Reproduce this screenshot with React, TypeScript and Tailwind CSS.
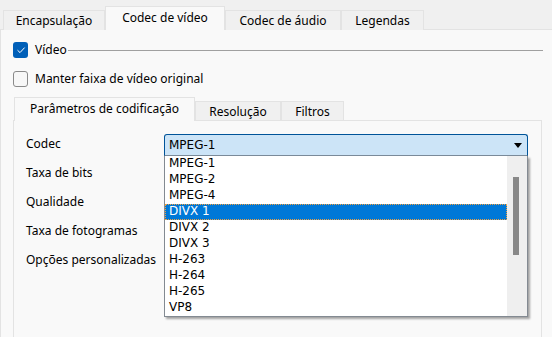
import React from 'react';

const codecs = ['MPEG-1', 'MPEG-2', 'MPEG-4', 'DIVX 1', 'DIVX 2', 'DIVX 3', 'H-263', 'H-264', 'H-265', 'VP8'];
const fields = ['Codec', 'Taxa de bits', 'Qualidade', 'Taxa de fotogramas', 'Opções personalizadas'];

function Tab({ label, active, w }: { label: string; active?: boolean; w: string }) {
  return (
    <div
      className={`${w} flex justify-center border border-[#e3e3e3] border-b-0 ${
        active ? 'h-[24px] bg-[#f9f9f9] pt-[2px] relative z-10' : 'h-[20px] bg-[#f0f0f0] pt-[1px]'
      }`}
    >
      {label}
    </div>
  );
}

export default function App() {
  return (
    <div
      className="w-[552px] h-[337px] overflow-hidden bg-[#f0f0f0] text-[12px] text-black"
      style={{ fontFamily: '"Noto Sans", "Open Sans", sans-serif' }}
    >
      <div className="flex items-end pl-[3px] pt-[6px]">
        <Tab label="Encapsulação" w="w-[102px]" />
        <Tab label="Codec de vídeo" w="w-[120px]" active />
        <Tab label="Codec de áudio" w="w-[116px]" />
        <Tab label="Legendas" w="w-[83px]" />
      </div>

      <div className="h-[320px] -mt-px bg-[#f9f9f9] border-t border-l border-[#e3e3e3] pl-[12px] pr-[10px]">
        <div className="flex items-center h-[18px] mt-[11px] gap-[7px]">
          <div className="w-[15px] h-[16px] rounded-[3px] bg-[#005fb8] flex items-center justify-center">
            <svg width="10" height="10" viewBox="0 0 10 10">
              <path d="M1.5 5.2 L4 7.6 L8.6 2.6" fill="none" stroke="white" strokeWidth="1" />
            </svg>
          </div>
          <span>Vídeo</span>
          <div className="flex-1 h-px bg-[#a0a0a0] -ml-[6px] -mr-[1px]" />
        </div>

        <div className="flex items-center h-[18px] mt-[11px] gap-[7px]">
          <div className="w-[15px] h-[16px] rounded-[3px] border border-[#8a8a8a] bg-[#f7f7f7]" />
          <span>Manter faixa de vídeo original</span>
        </div>

        <div className="flex items-end mt-[9px] pl-px">
          <Tab label="Parâmetros de codificação" w="w-[181px]" active />
          <Tab label="Resolução" w="w-[86px]" />
          <Tab label="Filtros" w="w-[63px]" />
        </div>

        <div className="h-[240px] -mt-px border border-[#e3e3e3] bg-[#f9f9f9] relative">
          <div className="flex flex-col pl-[12px] pt-[13px] gap-[10px]">
            {fields.map((f) => (
              <div key={f} className="h-[19px] flex items-center">
                {f}
              </div>
            ))}
          </div>

          <div className="absolute left-[150px] top-[13px] w-[364px]">
            <div className="h-[22px] rounded-t-[3px] border border-[#005499] border-b-[#7a8a99] bg-[#cce4f7] flex items-center justify-between pl-[4px] pr-[5px]">
              <span style={{ fontFamily: 'Tahoma, "DejaVu Sans", sans-serif' }} className="text-[12px]">
                MPEG-1
              </span>
              <svg width="8" height="5" viewBox="0 0 8 5">
                <path d="M0 0 H8 L4 5 Z" fill="black" />
              </svg>
            </div>
            <div
              className="h-[161px] bg-white border border-[#838a92] border-t-0 flex shadow-[2px_2px_2px_rgba(0,0,0,0.35)]"
              style={{ fontFamily: 'Tahoma, "DejaVu Sans", sans-serif' }}
            >
              <div className="flex-1 flex flex-col">
                {codecs.map((c) => (
                  <div
                    key={c}
                    className={`h-[16px] leading-[15px] pl-[4px] ${
                      c === 'DIVX 1'
                        ? 'bg-[#0078d7] text-white outline outline-1 outline-dotted outline-[#f0a040] -outline-offset-1'
                        : ''
                    }`}
                  >
                    {c}
                  </div>
                ))}
              </div>
              <div className="w-[20px] bg-[#efefef] pt-[21px] pl-[6px]">
                <div className="w-[6px] h-[78px] bg-[#888888]" />
              </div>
            </div>
          </div>
        </div>
      </div>
    </div>
  );
}
